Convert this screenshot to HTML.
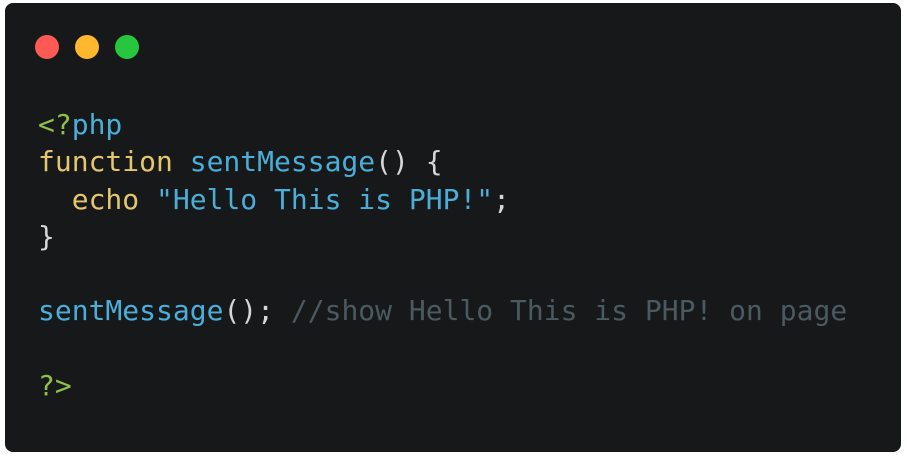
<!DOCTYPE html>
<html><head><style>
html,body{margin:0;padding:0;background:#fff;width:907px;height:459px;overflow:hidden}
.card{position:absolute;left:5px;top:3px;width:896px;height:449px;background:#17181a;border-radius:8px}
.dot{position:absolute;top:32px;width:24px;height:24px;border-radius:50%}
pre{position:absolute;left:33px;top:103px;margin:0;font-family:"DejaVu Sans Mono","Liberation Mono",monospace;font-size:28px;line-height:37.3px;color:#d6d6d6}
.g{color:#8fc04a}.b{color:#4aaed8}.y{color:#e3c66e}.c{color:#4a5a60}
</style></head><body>
<div class="card">
<div class="dot" style="left:30px;background:#fe5a55"></div>
<div class="dot" style="left:70px;background:#feb82d"></div>
<div class="dot" style="left:110px;background:#26c73f"></div>
<pre><span class="g">&lt;?</span><span class="b">php</span>
<span class="y">function</span> <span class="b">sentMessage</span>() {
  <span class="y">echo</span> <span class="b">"Hello This is PHP!"</span>;
}

<span class="b">sentMessage</span>(); <span class="c">//show Hello This is PHP! on page</span>

<span class="g">?&gt;</span></pre>
</div>
</body></html>
